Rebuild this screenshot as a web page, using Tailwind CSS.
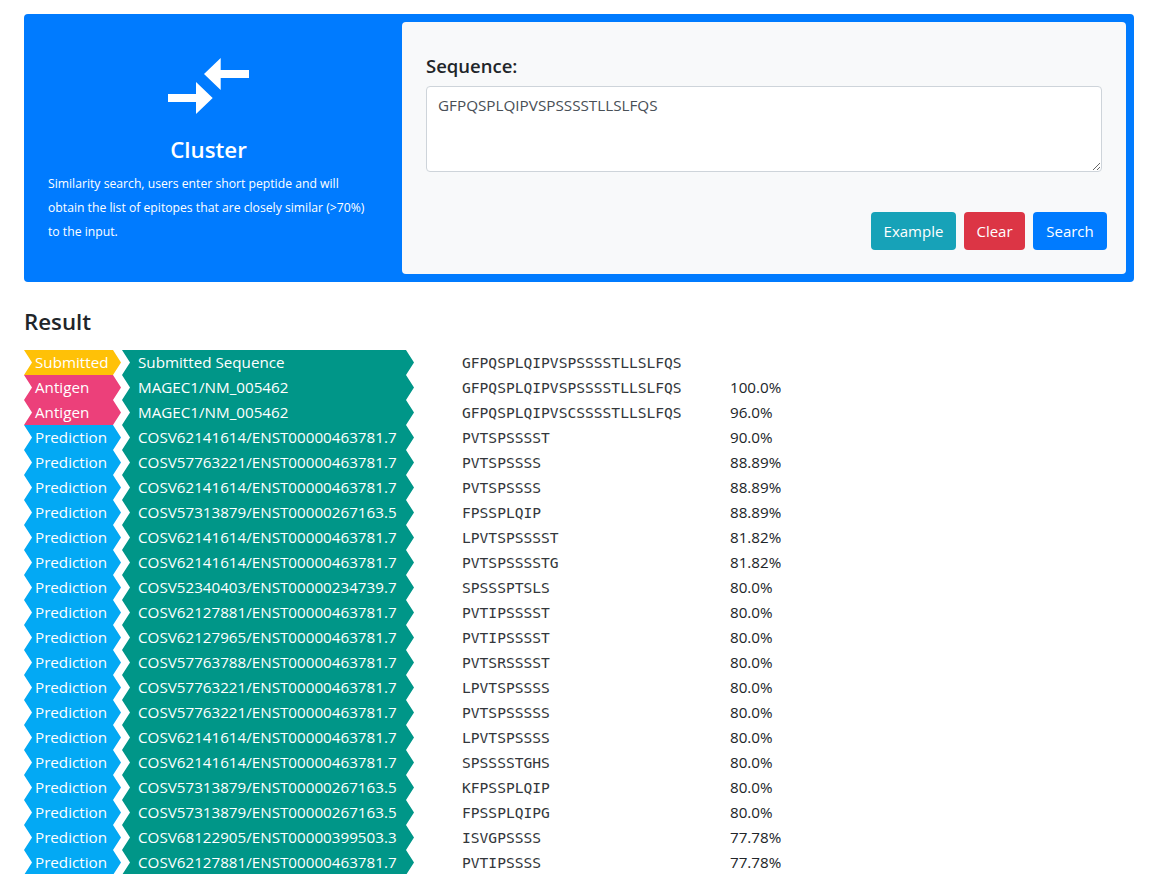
<!DOCTYPE html>
<html>
<head>
<meta charset="utf-8">
<title>Cluster</title>
<script src="https://cdn.jsdelivr.net/npm/@tailwindcss/browser@4"></script>
</head>
<body class="bg-white text-[#212529] font-['Open_Sans',sans-serif] h-[874px] overflow-hidden">
<div class="ml-[24px] w-[1110px] pt-[14px]">
    <div class="flex bg-[#007bff] rounded p-2 h-[268px]">
        <div class="w-[370px] pt-[35px] pl-[16px] text-white shrink-0">
            <svg class="block ml-[120px]" width="88" height="60" viewBox="0 0 88 60" fill="#fff">
                <polygon points="81,13 52.7,13 52.7,1 36,17 52.7,33 52.7,21 81,21"/>
                <polygon points="0,37 28,37 28,25 44.7,41 28,57 28,45 0,45"/>
            </svg>
            <h1 class="text-center text-[22.3px] font-semibold leading-[28px] mt-[19px] ml-[-33px]">Cluster</h1>
            <p class="text-[12.2px] leading-[24px] mt-[8px] w-[325px]">Similarity search, users enter short peptide and will obtain the list of epitopes that are closely similar (&gt;70%) to the input.</p>
        </div>
        <div class="flex-1 min-w-0 bg-[#f8f9fa] rounded pl-6 pr-[19px] pt-[30px]">
            <label class="block text-[18.5px] font-semibold leading-[28px]">Sequence:</label>
            <textarea class="block w-[676px] h-[86px] mt-[6px] bg-white border border-[#ced4da] rounded pl-[11px] pr-3 py-[6px] text-[#495057] text-[15.25px] leading-[24px]">GFPQSPLQIPVSPSSSSTLLSLFQS</textarea>
            <div class="flex justify-end gap-2 mt-[40px]">
                <button class="h-[38px] w-[85px] rounded bg-[#17a2b8] text-white text-[15px]">Example</button>
                <button class="h-[38px] w-[61px] rounded bg-[#dc3545] text-white text-[15px]">Clear</button>
                <button class="h-[38px] w-[74px] rounded bg-[#007bff] text-white text-[15px]">Search</button>
            </div>
        </div>
    </div>
    <h2 class="text-[22.3px] font-semibold leading-[28px] mt-[26px] mb-[14px]">Result</h2>
    <div id="rows"></div>
</div>
<script>
    const tagClass = {
        Submitted: "bg-[#ffc107]",
        Antigen: "bg-[#ec407a]",
        Prediction: "bg-[#03a9f4]"
    };
    const data = [
        ["Submitted", "Submitted Sequence", "GFPQSPLQIPVSPSSSSTLLSLFQS", ""],
        ["Antigen", "MAGEC1/NM_005462", "GFPQSPLQIPVSPSSSSTLLSLFQS", "100.0%"],
        ["Antigen", "MAGEC1/NM_005462", "GFPQSPLQIPVSCSSSSTLLSLFQS", "96.0%"],
        ["Prediction", "COSV62141614/ENST00000463781.7", "PVTSPSSSST", "90.0%"],
        ["Prediction", "COSV57763221/ENST00000463781.7", "PVTSPSSSS", "88.89%"],
        ["Prediction", "COSV62141614/ENST00000463781.7", "PVTSPSSSS", "88.89%"],
        ["Prediction", "COSV57313879/ENST00000267163.5", "FPSSPLQIP", "88.89%"],
        ["Prediction", "COSV62141614/ENST00000463781.7", "LPVTSPSSSST", "81.82%"],
        ["Prediction", "COSV62141614/ENST00000463781.7", "PVTSPSSSSTG", "81.82%"],
        ["Prediction", "COSV52340403/ENST00000234739.7", "SPSSSPTSLS", "80.0%"],
        ["Prediction", "COSV62127881/ENST00000463781.7", "PVTIPSSSST", "80.0%"],
        ["Prediction", "COSV62127965/ENST00000463781.7", "PVTIPSSSST", "80.0%"],
        ["Prediction", "COSV57763788/ENST00000463781.7", "PVTSRSSSST", "80.0%"],
        ["Prediction", "COSV57763221/ENST00000463781.7", "LPVTSPSSSS", "80.0%"],
        ["Prediction", "COSV57763221/ENST00000463781.7", "PVTSPSSSSS", "80.0%"],
        ["Prediction", "COSV62141614/ENST00000463781.7", "LPVTSPSSSS", "80.0%"],
        ["Prediction", "COSV62141614/ENST00000463781.7", "SPSSSSTGHS", "80.0%"],
        ["Prediction", "COSV57313879/ENST00000267163.5", "KFPSSPLQIP", "80.0%"],
        ["Prediction", "COSV57313879/ENST00000267163.5", "FPSSPLQIPG", "80.0%"],
        ["Prediction", "COSV68122905/ENST00000399503.3", "ISVGPSSSS", "77.78%"],
        ["Prediction", "COSV62127881/ENST00000463781.7", "PVTIPSSSS", "77.78%"]
    ];
    const chevron = "polygon(0 0, calc(100% - 8px) 0, 100% 50%, calc(100% - 8px) 100%, 0 100%, 8px 50%)";
    document.getElementById("rows").innerHTML = data.map(function(r) {
        return `<div class="flex items-center h-[25px] text-[15.2px]">
            <div class="w-[97px] h-full flex items-center pl-[11px] text-white ${tagClass[r[0]]}" style="clip-path:${chevron}">${r[0]}</div>
            <div class="w-[292px] h-full ml-[1px] flex items-center pl-[16px] text-white bg-[#009688]" style="clip-path:${chevron}">${r[1]}</div>
            <div class="w-[268px] ml-[48px] font-['DejaVu_Sans_Mono',monospace] text-[14.6px] text-[#33373b]">${r[2]}</div>
            <div>${r[3]}</div>
        </div>`;
    }).join("");
</script>
</body>
</html>
